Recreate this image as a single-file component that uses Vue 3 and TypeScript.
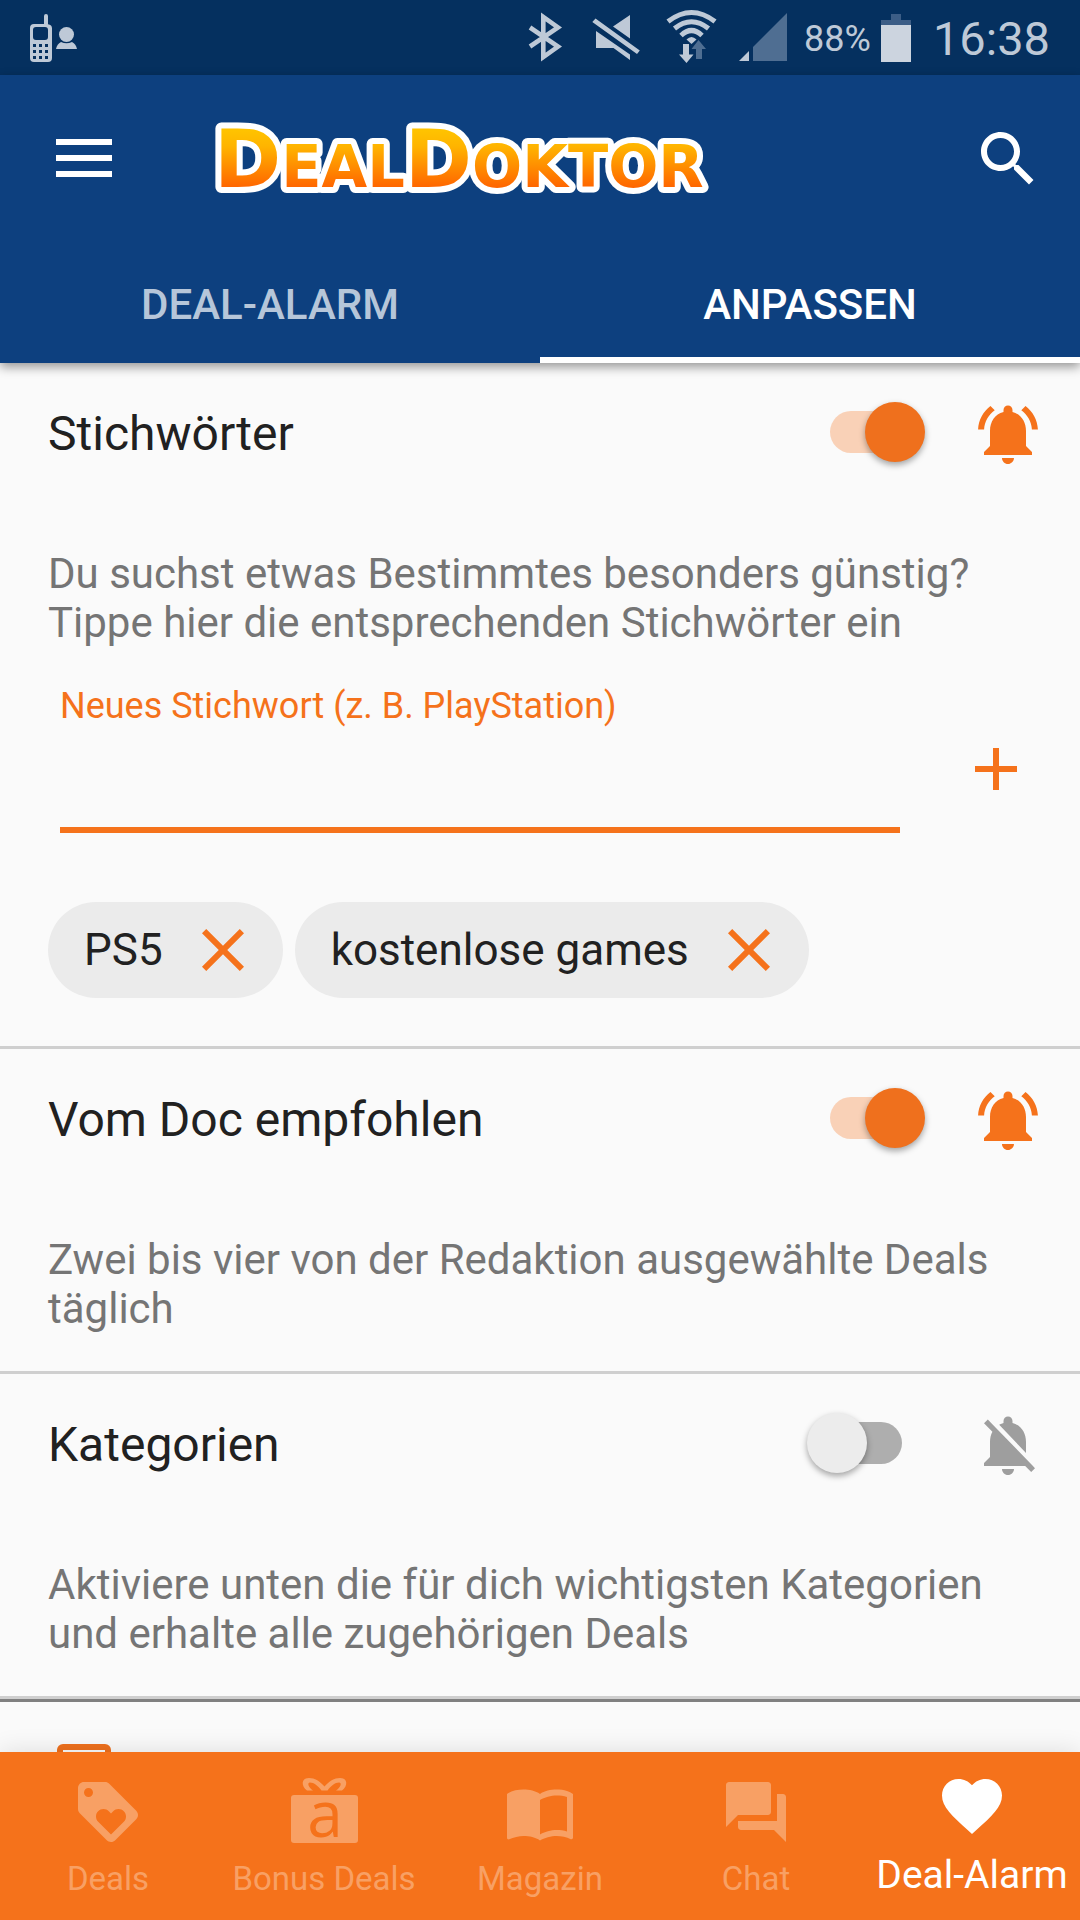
<script setup lang="ts">
import { ref } from 'vue'

interface Section {
  id: string
  title: string
  text: string
  active: boolean
}

interface NavItem {
  label: string
  icon: string
  current?: boolean
}

const sections = ref<Section[]>([
  {
    id: 'keywords',
    title: 'Stichwörter',
    text: 'Du suchst etwas Bestimmtes besonders günstig? Tippe hier die entsprechenden Stichwörter ein',
    active: true,
  },
  {
    id: 'recommended',
    title: 'Vom Doc empfohlen',
    text: 'Zwei bis vier von der Redaktion ausgewählte Deals täglich',
    active: true,
  },
  {
    id: 'categories',
    title: 'Kategorien',
    text: 'Aktiviere unten die für dich wichtigsten Kategorien und erhalte alle zugehörigen Deals',
    active: false,
  },
])

const keywords = ref<string[]>(['PS5', 'kostenlose games'])
const draft = ref('')

function addKeyword(): void {
  const value = draft.value.trim()
  if (value && !keywords.value.includes(value)) keywords.value.push(value)
  draft.value = ''
}

function removeKeyword(word: string): void {
  keywords.value = keywords.value.filter((k) => k !== word)
}

const bellOn =
  'M7.58 4.08L6.15 2.65C3.75 4.48 2.17 7.3 2.03 10.5h2c.15-2.65 1.51-4.97 3.55-6.42zm12.39 6.42h2c-.15-3.2-1.73-6.02-4.12-7.85l-1.42 1.43c2.02 1.45 3.39 3.77 3.54 6.42zM18 11c0-3.07-1.64-5.64-4.5-6.32V4c0-.83-.67-1.5-1.5-1.5s-1.5.67-1.5 1.5v.68C7.63 5.36 6 7.92 6 11v5l-2 2v1h16v-1l-2-2v-5zm-6 11c.14 0 .27-.01.4-.04.65-.14 1.18-.58 1.44-1.18.1-.24.15-.5.15-.78h-4c.01 1.1.9 2 2.01 2z'
const bellOff =
  'M20 18.69L7.84 6.14 5.27 3.49 4 4.76l2.8 2.8v.01c-.52.99-.8 2.16-.8 3.42v5l-2 2v1h13.73l2 2L21 19.72l-1-1.03zM12 22c1.11 0 2-.89 2-2h-4c0 1.11.89 2 2 2zm6-7.32V11c0-3.08-1.64-5.64-4.5-6.32V4c0-.83-.67-1.5-1.5-1.5s-1.5.67-1.5 1.5v.68c-.15.03-.29.08-.42.12-.1.03-.2.07-.3.11h-.01c-.01 0-.01 0-.02.01-.23.09-.46.2-.68.31 0 0-.01 0-.01.01L18 14.68z'

const navItems: NavItem[] = [
  {
    label: 'Deals',
    icon: 'M21.41 11.58l-9-9C12.05 2.22 11.55 2 11 2H4c-1.1 0-2 .9-2 2v7c0 .55.22 1.05.59 1.42l9 9c.36.36.86.58 1.41.58.55 0 1.05-.22 1.41-.59l7-7c.37-.36.59-.86.59-1.41 0-.55-.23-1.06-.59-1.42zM5.5 7C4.67 7 4 6.33 4 5.5S4.67 4 5.5 4 7 4.67 7 5.5 6.33 7 5.5 7zm11.77 8.27L13 19.54l-4.27-4.27C8.28 14.81 8 14.19 8 13.5c0-1.38 1.12-2.5 2.5-2.5.69 0 1.32.28 1.77.74l.73.72.73-.73c.45-.45 1.08-.73 1.77-.73 1.38 0 2.5 1.12 2.5 2.5 0 .69-.28 1.32-.73 1.77z',
  },
  { label: 'Bonus Deals', icon: '' },
  {
    label: 'Magazin',
    icon: 'M21 5c-1.11-.35-2.33-.5-3.5-.5-1.95 0-4.05.4-5.5 1.5-1.45-1.1-3.55-1.5-5.5-1.5S2.45 4.9 1 6v14.65c0 .25.25.5.5.5.1 0 .15-.05.25-.05C3.1 20.45 5.05 20 6.5 20c1.95 0 4.05.4 5.5 1.5 1.35-.85 3.8-1.5 5.5-1.5 1.65 0 3.35.3 4.75 1.05.1.05.15.05.25.05.25 0 .5-.25.5-.5V6c-.6-.45-1.25-.75-2-1zm0 13.5c-1.1-.35-2.3-.5-3.5-.5-1.7 0-4.15.65-5.5 1.5V8c1.35-.85 3.8-1.5 5.5-1.5 1.2 0 2.4.15 3.5.5v11.5z',
  },
  {
    label: 'Chat',
    icon: 'M21 6h-2v9H6v2c0 .55.45 1 1 1h11l4 4V7c0-.55-.45-1-1-1zm-4 6V3c0-.55-.45-1-1-1H3c-.55 0-1 .45-1 1v14l4-4h10c.55 0 1-.45 1-1z',
  },
  {
    label: 'Deal-Alarm',
    current: true,
    icon: 'M12 21.35l-1.45-1.32C5.4 15.36 2 12.28 2 8.5 2 5.42 4.42 3 7.5 3c1.74 0 3.41.81 4.5 2.09C13.09 3.81 14.76 3 16.5 3 19.58 3 22 5.42 22 8.5c0 3.78-3.4 6.86-8.55 11.54L12 21.35z',
  },
]
</script>

<template>
  <div class="screen">
    <div class="status">
      <svg class="call" width="48" height="48" viewBox="0 0 48 48" aria-hidden="true">
        <path
          fill-rule="evenodd"
          d="M14 2a2 2 0 0 1 4 0v8.200q4 .6 4 4V44q0 4-4 4H4q-4 0-4-4V14q0-4 4-4h10zM6 13q-3 0-3 3v7q0 3 3 3h9q3 0 3-3v-7q0-3-3-3zM3 30v3h3v-3zm6 0v3h3v-3zm6 0v3h3v-3zM3 36v3h3v-3zm6 0v3h3v-3zm6 0v3h3v-3zM3 42v3h3v-3zm6 0v3h3v-3zm6 0v3h3v-3z"
        />
        <circle cx="36.500" cy="20.500" r="7.500" />
        <path d="M31 28q5.500 2.500 11 0q4 2 5 7H26q1-5 5-7z" />
      </svg>
      <div class="status-right">
        <svg width="264" height="75" viewBox="526 0 264 75" aria-hidden="true">
          <path
            d="M530 27.500L558 46.500L543.300 57V17L558 27.500L530 46.500"
            fill="none"
            stroke="#bec9d7"
            stroke-width="4.600"
            stroke-miterlimit="8"
          />
          <path d="M595.500 18.500L639.800 50.500L637 54L592.300 22zM596 31L630 54.500V60L613.500 48H596zM630 15V38.500L613 26.500z" />
          <g fill="none" stroke="#bec9d7" stroke-width="5">
            <path d="M668 21.500Q691.500 3.500 715 21.500" />
            <path d="M674.500 28.500Q691.500 15 708.500 28.500" />
            <path d="M681 35.500Q691.500 25.500 702 35.500" />
          </g>
          <path d="M686.500 39.500Q691.500 34.500 696.500 39.500L691.500 44z" />
          <path d="M683 44h6v10.500h4.500L686.500 63L679 54.500h4z" />
          <path class="dim" d="M698.500 40L706 49h-4v10h-6V49h-4.500z" />
          <path d="M739 61L749 51V61z" />
          <path class="dim" d="M753 61V47L787 13V61z" />
        </svg>
        <span class="percent">88%</span>
        <svg width="30" height="48" viewBox="0 0 30 48" aria-hidden="true">
          <path class="dark" d="M10 0h10v6h10v5H0V6h10z" />
          <path class="charge" d="M0 11h30v37H0z" />
        </svg>
        <span class="time">16:38</span>
      </div>
    </div>

    <header class="appbar">
      <div class="toolbar">
        <button class="icon-button" type="button" aria-label="Menü">
          <svg width="56" height="40" viewBox="0 0 56 40"><path d="M0 0h56v6H0zM0 16h56v6H0zM0 32h56v6H0z" /></svg>
        </button>
        <svg class="logo" width="496" height="84" viewBox="0 0 496 84" role="img" aria-label="DealDoktor">
          <defs>
            <linearGradient id="logo-fill" gradientUnits="userSpaceOnUse" x1="0" y1="12" x2="0" y2="70">
              <stop offset="0" stop-color="#ffc400" />
              <stop offset="0.300" stop-color="#ffb400" />
              <stop offset="1" stop-color="#ff6600" />
            </linearGradient>
          </defs>
          <text x="-2" y="70" class="logo-text">D<tspan class="small">EAL</tspan>D<tspan class="small">OKTOR</tspan></text>
        </svg>
        <button class="icon-button search" type="button" aria-label="Suche">
          <svg width="72" height="72" viewBox="0 0 24 24">
            <path
              d="M15.500 14h-.79l-.28-.27C15.410 12.590 16 11.110 16 9.500 16 5.910 13.090 3 9.500 3S3 5.910 3 9.500 5.910 16 9.500 16c1.610 0 3.090-.59 4.230-1.570l.27.28v.79l5 4.990L20.490 19l-4.990-5zm-6 0C7.010 14 5 11.990 5 9.500S7.010 5 9.500 5 14 7.010 14 9.500 11.990 14 9.500 14z"
            />
          </svg>
        </button>
      </div>
      <div class="tabs" role="tablist">
        <button class="tab" type="button" role="tab" aria-selected="false">DEAL-ALARM</button>
        <button class="tab selected" type="button" role="tab" aria-selected="true">ANPASSEN</button>
      </div>
    </header>

    <main class="content">
      <section v-for="section in sections" :key="section.id" class="section">
        <div class="section-head">
          <label class="title" :for="section.id">{{ section.title }}</label>
          <input :id="section.id" v-model="section.active" class="switch" type="checkbox" role="switch" />
          <svg class="bell" :class="{ off: !section.active }" width="72" height="72" viewBox="0 0 24 24" aria-hidden="true">
            <path :d="section.active ? bellOn : bellOff" />
          </svg>
        </div>
        <p class="text">{{ section.text }}</p>

        <template v-if="section.id === 'keywords'">
          <form class="entry" @submit.prevent="addKeyword">
            <div class="field">
              <label for="new-keyword">Neues Stichwort (z. B. PlayStation)</label>
              <input id="new-keyword" v-model="draft" type="text" autocomplete="off" />
            </div>
            <button class="add" type="submit" aria-label="Hinzufügen">
              <svg width="72" height="72" viewBox="0 0 24 24"><path d="M19 13h-6v6h-2v-6H5v-2h6V5h2v6h6v2z" /></svg>
            </button>
          </form>
          <ul class="chips">
            <li v-for="word in keywords" :key="word" class="chip">
              <span>{{ word }}</span>
              <button type="button" :aria-label="word + ' entfernen'" @click="removeKeyword(word)">
                <svg width="72" height="72" viewBox="0 0 24 24">
                  <path
                    d="M19 6.410L17.590 5 12 10.590 6.410 5 5 6.410 10.590 12 5 17.590 6.410 19 12 13.410 17.590 19 19 17.590 13.410 12z"
                  />
                </svg>
              </button>
            </li>
          </ul>
        </template>
      </section>
      <div class="categories">
        <input class="check" type="checkbox" aria-label="Alle Kategorien" />
      </div>
    </main>

    <nav class="bottom">
      <a v-for="item in navItems" :key="item.label" href="#" class="nav-item" :class="{ current: item.current }">
        <svg v-if="item.icon" width="72" height="72" viewBox="0 0 24 24" aria-hidden="true"><path :d="item.icon" /></svg>
        <svg v-else class="gift" width="72" height="72" viewBox="0 0 72 72" aria-hidden="true">
          <rect x="3" y="19" width="67" height="48" rx="3" />
          <path
            fill-rule="evenodd"
            d="M19 14.500C13 10 13 2 21 2C28 2 32 6 36.500 10.500C41 6 45 2 52 2C60 2 60 10 54 14.500H48C53 11 54 6.500 51 6.500C47 6.500 43 10 39.500 14.500H33.500C30 10 26 6.500 22 6.500C19 6.500 20 11 25 14.500z"
          />
          <text x="37" y="61" text-anchor="middle">a</text>
        </svg>
        <span>{{ item.label }}</span>
      </a>
    </nav>
  </div>
</template>

<style>
body {
  background: #fafafa;
}
</style>

<style scoped>
.screen {
  display: flex;
  flex-direction: column;
  height: 100vh;
  min-width: 0;
  overflow: hidden;
  background: #fafafa;
  font-family: Roboto, 'Liberation Sans', sans-serif;
  color: #212121;
}

button {
  padding: 0;
  border: 0;
  background: none;
  font: inherit;
  color: inherit;
  cursor: pointer;
}

svg {
  display: block;
  flex: none;
  fill: currentColor;
}

.status {
  flex: none;
  display: flex;
  align-items: center;
  justify-content: space-between;
  height: 75px;
  padding: 0 30px;
  background: #05305f;
  color: #bec9d7;
}

.status-right {
  display: flex;
  align-items: center;
}

.percent {
  margin: 0 10px 0 14px;
  padding-top: 2px;
  font-size: 36px;
  line-height: 42px;
}

.time {
  margin-left: 22px;
  padding-top: 2px;
  font-size: 47px;
  line-height: 56px;
}

.dim {
  fill: #4f6e92;
}

.dark {
  fill: #3c5d86;
}

.charge {
  fill: #ccd4df;
}

.appbar {
  flex: none;
  position: relative;
  z-index: 1;
  background: #0d407f;
  color: #fff;
  box-shadow: 0 4px 10px rgba(0, 0, 0, 0.4);
}

.toolbar {
  display: flex;
  align-items: center;
  height: 168px;
  padding: 0 36px 0 48px;
}

.icon-button {
  display: flex;
  align-items: center;
  justify-content: center;
  width: 72px;
  height: 72px;
}

.search {
  margin-left: auto;
}

.logo {
  margin-left: 96px;
  overflow: visible;
}

.logo-text {
  font-family: 'DejaVu Sans', sans-serif;
  font-weight: 700;
  font-size: 81px;
  fill: url(#logo-fill);
  stroke: #fff;
  stroke-width: 12px;
  stroke-linejoin: round;
  paint-order: stroke;
}

.small {
  font-size: 59px;
}

.tabs {
  display: flex;
  height: 120px;
}

.tab {
  flex: 1;
  border-top: 8px solid transparent;
  border-bottom: 6px solid transparent;
  font-size: 42px;
  font-weight: 500;
  color: #b6c6d9;
}

.selected {
  border-bottom-color: #fff;
  color: #fff;
}

.content {
  flex: 1;
  min-height: 0;
  overflow-y: auto;
  scrollbar-width: none;
}

.section {
  border-bottom: 3px solid #cfcfcf;
}

.section-head {
  display: flex;
  align-items: center;
  gap: 47px;
  height: 142px;
  padding: 0 36px 0 48px;
}

.title {
  flex: 1;
  font-size: 48px;
  line-height: 56px;
}

.switch {
  flex: none;
  appearance: none;
  position: relative;
  width: 118px;
  height: 60px;
  margin: 0 0 4px;
}

.switch::before {
  content: '';
  position: absolute;
  inset: 9px 23px;
  border-radius: 21px;
  background: #aeaeae;
}

.switch::after {
  content: '';
  position: absolute;
  left: 0;
  width: 60px;
  height: 60px;
  border-radius: 50%;
  background: #ececec;
  box-shadow: 0 3px 6px rgba(0, 0, 0, 0.35);
}

.switch:checked::before {
  background: #f9d1b7;
}

.switch:checked::after {
  left: 58px;
  background: #ef701d;
}

.bell {
  color: #f5721b;
}

.off {
  color: #9e9e9e;
}

.text {
  margin: 0;
  padding: 44px 48px 38px;
  font-size: 42px;
  line-height: 49px;
  color: #757575;
}

.entry {
  display: flex;
  align-items: flex-end;
  gap: 60px;
  padding: 0 48px 0 60px;
  color: #f5721b;
}

.field {
  flex: 1;
  display: flex;
  flex-direction: column;
}

.field label {
  font-size: 36px;
  line-height: 42px;
}

.field input {
  box-sizing: border-box;
  width: 100%;
  height: 106px;
  padding: 0;
  border: 0;
  border-bottom: 6px solid #f5721b;
  border-radius: 0;
  outline: 0;
  background: none;
  font: inherit;
  font-size: 48px;
  color: #212121;
}

.add {
  height: 128px;
}

.chips {
  display: flex;
  flex-wrap: wrap;
  gap: 12px;
  margin: 0;
  padding: 69px 48px 48px;
  list-style: none;
}

.chip {
  display: flex;
  align-items: center;
  gap: 24px;
  height: 96px;
  padding: 0 24px 0 36px;
  border-radius: 48px;
  background: #ebebeb;
  font-size: 44px;
}

.chip button {
  color: #f5721b;
}

.categories {
  padding: 42px 57px;
  border-top: 3px solid #808080;
}

.check {
  display: block;
  appearance: none;
  box-sizing: border-box;
  width: 54px;
  height: 54px;
  margin: 0;
  border: 6px solid #ef701d;
  border-radius: 6px;
}

.bottom {
  flex: none;
  position: relative;
  display: flex;
  height: 168px;
  background: #f5721b;
  box-shadow: 0 0 24px rgba(0, 0, 0, 0.12);
}

.nav-item {
  flex: 1 1 0;
  min-width: 0;
  display: flex;
  flex-direction: column;
  align-items: center;
  padding-top: 24px;
  text-decoration: none;
  white-space: nowrap;
  font-size: 33px;
  line-height: 42px;
  color: #f8a064;
}

.nav-item span {
  margin-top: 10px;
}

.gift {
  overflow: visible;
}

.gift text {
  font-family: 'Open Sans', 'Noto Sans', sans-serif;
  font-size: 64px;
  fill: #f5721b;
}

.current {
  padding-top: 18px;
  font-size: 39px;
  line-height: 46px;
  color: #fff;
}
</style>
